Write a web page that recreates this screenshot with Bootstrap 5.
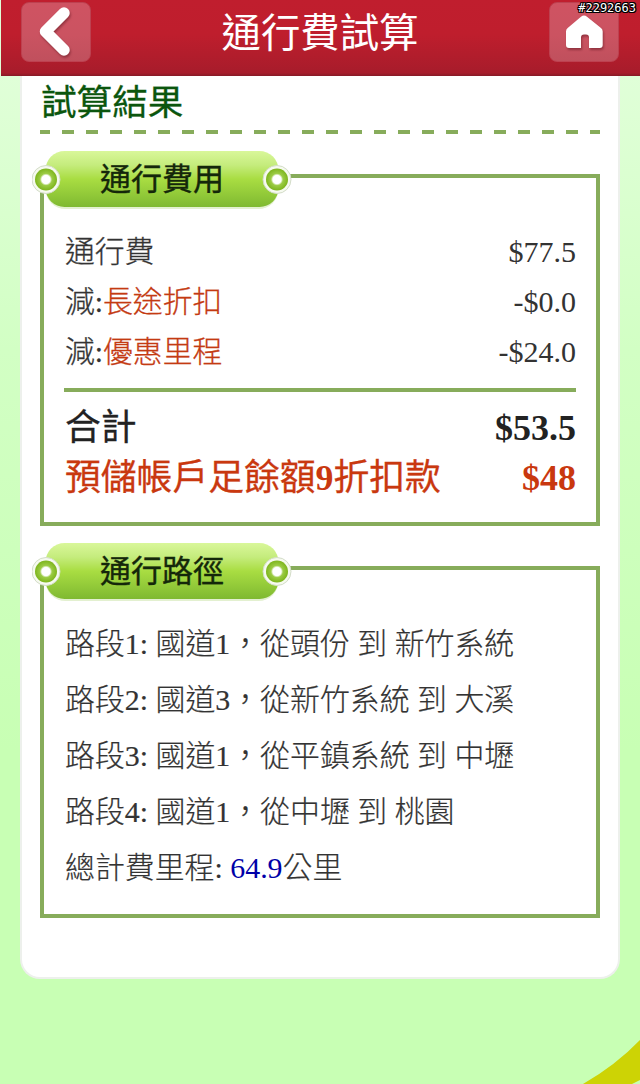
<!DOCTYPE html>
<html lang="zh-Hant">
<head>
<meta charset="utf-8">
<meta name="viewport" content="width=device-width, initial-scale=1">
<title>通行費試算</title>
<link href="https://cdn.jsdelivr.net/npm/bootstrap@5.3.0/dist/css/bootstrap.min.css" rel="stylesheet">
<style>
body{font-family:"Liberation Serif","Noto Sans CJK TC",serif;font-size:30px;font-weight:300;color:#333;background:linear-gradient(#e0ffd8 76px,#d2ffc4 350px,#c8ffb4 750px,#c8ffb4);height:1084px;overflow:hidden}
.topbar{height:76px;margin-left:1px;padding:2px 21px 0 20px;background:linear-gradient(#c01e2e,#bf1e2d 45%,#a71c2b 96%,#861a26)}
.topbar h1{font-size:39.4px;line-height:64px;color:#fff;font-weight:400}
.tool{width:70px;height:60px;border-radius:8px;background:linear-gradient(#cf5362,#cb5361 55%,#c0505d);border:1px solid #bd4150;padding:0}
.tool svg{display:block;width:68px;height:58px;filter:drop-shadow(1px 2px 1px #70202a99)}
.serial{top:1px;right:4px;font:12px/14px "DejaVu Sans Mono",monospace;color:#fff;text-shadow:1px 0 #000,-1px 0 #000,0 1px #000,0 -1px #000,1px 1px #000,-1px -1px #000,1px -1px #000,-1px 1px #000}
.sheet{width:600px;height:903px;background:#fff;border:2px solid #edf0ec;border-top:0;border-radius:0 0 20px 20px;padding:0 18px}
.sheet h2{height:54px;line-height:55px;font-size:35.6px;color:#0b560e;padding-left:1px;font-weight:400;-webkit-text-stroke:.3px #0b560e}
.dashes{height:4px;background:repeating-linear-gradient(90deg,#87ac5b 0 10px,transparent 10px 22px,#87ac5b 22px 24px)}
.panel{border:4px solid #87ac5b;height:352px;padding:49px 20px 0 21px;margin-top:40px}
.route{padding-top:46px}
.fee-row{height:50px;line-height:50px}
.fee-row>span:first-child{-webkit-text-stroke:.3px;font-size:29.8px}
.route .fee-row{height:56px;line-height:56px;font-size:29.9px;-webkit-text-stroke:.2px}
.route .fee-row .km{font-size:29.9px;-webkit-text-stroke:0}
.rule{height:4px;background:#87ac5b;margin:11px 0 11px -1px}
.total{color:#222;font-weight:400;line-height:51px}
.total>span:first-child{font-size:35.8px}
.total>b{font-size:36px}
.total b{-webkit-text-stroke:0}
.accent{color:#c43a12}
.total.accent{color:#c9380f}
.tag{left:-12px;top:-32px;width:264px;height:64px}
.tag text{font-family:"Noto Sans CJK TC",sans-serif;font-size:31px;font-weight:400}
.km{color:#0000a8}
.corner{right:0;bottom:0}
</style>
</head>
<body class="position-relative">
<header class="topbar d-flex justify-content-between align-items-start">
  <button class="tool btn" aria-label="返回"><svg viewBox="0 0 68 58"><path d="M42 10 23.500 28.500 42 47" fill="none" stroke="#fff" stroke-width="11.500" stroke-linecap="round" stroke-linejoin="round"/></svg></button>
  <h1 class="m-0">通行費試算</h1>
  <button class="tool btn" aria-label="首頁"><svg viewBox="0 0 68 58"><path d="M34 12.500q1.500 0 3 1.300L51 25q1.700 1.300 1.700 3.500V42q0 3-3 3H39V34.500q0-3-3-3H34q-3 0-3 3V45H19q-3 0-3-3V28.500q0-2.200 1.700-3.500L31 13.800q1.500-1.300 3-1.300Z" fill="#fff"/></svg></button>
</header>
<span class="serial position-absolute">#2292663</span>
<main class="sheet mx-auto">
  <h2 class="m-0">試算結果</h2>
  <div class="dashes"></div>
  <section class="panel position-relative">
    <svg class="tag position-absolute" viewBox="0 0 264 64">
      <defs>
        <linearGradient id="leaf" x2="0" y2="1"><stop stop-color="#d9f79a"/><stop offset=".25" stop-color="#c5ec7d"/><stop offset=".5" stop-color="#a9dd42"/><stop offset="1" stop-color="#7fb931"/></linearGradient>
        <radialGradient id="eye"><stop offset=".38" stop-color="#fff"/><stop offset=".55" stop-color="#9ccc45"/><stop offset="1" stop-color="#7db51c"/></radialGradient>
        <g id="plate"><rect x="13.500" y="6" width="233" height="57" rx="20" fill="#e3f0d0"/><rect x="13.500" y="5" width="233" height="56" rx="19" fill="url(#leaf)"/>
          <g stroke="#d3dcc8"><circle cx="14" cy="33.500" r="14" fill="#f6faef"/><circle cx="245" cy="33.500" r="14" fill="#f6faef"/></g>
          <g fill="url(#eye)"><circle cx="14" cy="33.500" r="11"/><circle cx="245" cy="33.500" r="11"/></g></g>
      </defs>
      <use href="#plate"/><text x="68" y="44" textLength="124" fill="#14270a" stroke="#14270a" stroke-width=".4">通行費用</text>
    </svg>
    <div class="fee-row d-flex justify-content-between"><span>通行費</span><span>$77.5</span></div>
    <div class="fee-row d-flex justify-content-between"><span>減:<span class="accent">長途折扣</span></span><span>-$0.0</span></div>
    <div class="fee-row d-flex justify-content-between"><span>減:<span class="accent">優惠里程</span></span><span>-$24.0</span></div>
    <div class="rule"></div>
    <div class="fee-row total d-flex justify-content-between"><span>合計</span><b>$53.5</b></div>
    <div class="fee-row total accent d-flex justify-content-between"><span>預儲帳戶足餘額<b>9</b>折扣款</span><b>$48</b></div>
  </section>
  <section class="panel route position-relative">
    <svg class="tag position-absolute" viewBox="0 0 264 64"><use href="#plate"/><text x="68" y="44" textLength="124" fill="#14270a" stroke="#14270a" stroke-width=".4">通行路徑</text></svg>
    <div class="fee-row">路段1: 國道1，從頭份 到 新竹系統</div>
    <div class="fee-row">路段2: 國道3，從新竹系統 到 大溪</div>
    <div class="fee-row">路段3: 國道1，從平鎮系統 到 中壢</div>
    <div class="fee-row">路段4: 國道1，從中壢 到 桃園</div>
    <div class="fee-row">總計費里程: <span class="km">64.9</span>公里</div>
  </section>
</main>
<svg class="corner position-absolute" width="60" height="46"><path d="M3 46Q36 27 60 2V42L52 46Z" fill="#cdd305"/></svg>
<script src="https://cdn.jsdelivr.net/npm/bootstrap@5.3.0/dist/js/bootstrap.bundle.min.js"></script>
</body>
</html>
